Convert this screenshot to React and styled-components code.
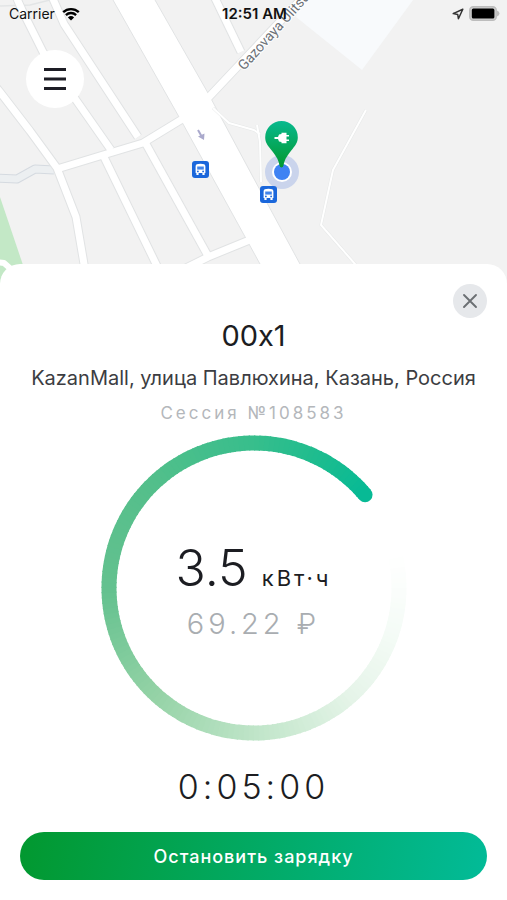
import React, { useState } from "react";
import styled, { createGlobalStyle } from "styled-components";

// angle in degrees clockwise from 12 o'clock, rgb
const ringStops = [
  [78, [255, 255, 255]],
  [110, [244, 251, 246]],
  [140, [229, 244, 232]],
  [180, [192, 229, 201]],
  [225, [147, 210, 165]],
  [270, [100, 193, 143]],
  [315, [84, 191, 139]],
  [360, [56, 190, 140]],
  [390, [27, 188, 143]],
  [410, [7, 186, 149]],
];

const RING_RADIUS = 145;
const RING_STEP = 2;

const ringColor = (angle) => {
  const next = ringStops.findIndex((stop) => stop[0] >= angle);
  if (next <= 0) return `rgb(${ringStops[0][1].join(",")})`;
  const [a0, c0] = ringStops[next - 1];
  const [a1, c1] = ringStops[next];
  const t = (angle - a0) / (a1 - a0);
  return `rgb(${c0.map((c, i) => Math.round(c + (c1[i] - c) * t)).join(",")})`;
};

const ringPoint = (angle) => {
  const rad = ((angle - 90) * Math.PI) / 180;
  return [
    153 + RING_RADIUS * Math.cos(rad),
    153 + RING_RADIUS * Math.sin(rad),
  ];
};

const ChargeRing = () => {
  const first = ringStops[0][0];
  const last = ringStops[ringStops.length - 1][0];
  const parts = [];
  for (let a = first; a < last; a += RING_STEP) {
    const end = Math.min(a + RING_STEP, last);
    const from = ringPoint(a);
    const to = ringPoint(Math.min(end + 0.5, last));
    parts.push(
      <path
        key={a}
        d={`M${from} A${RING_RADIUS} ${RING_RADIUS} 0 0 1 ${to}`}
        stroke={ringColor(end)}
      />
    );
  }
  const [capX, capY] = ringPoint(last);

  return (
    <StRingSvg viewBox="0 0 306 306" fill="none" strokeWidth="15" aria-hidden>
      {parts}
      <circle cx={capX} cy={capY} r="7.5" fill={ringColor(last)} />
    </StRingSvg>
  );
};

const BusStop = ({ x, y }) => (
  <g transform={`translate(${x} ${y})`}>
    <rect width="17" height="17" rx="3" fill="#1b67db" />
    <path
      d="M3.6 5.4c0-2 1.7-2.6 4.9-2.6s4.9.6 4.9 2.6v6.6h-.8v1.9h-2.2V12H6.600v1.900H4.400V12h-.8z"
      fill="#fff"
    />
    <path d="M5.2 5.5h6.600v3.100H5.200z" fill="#4385ea" />
    <circle cx="5.9" cy="10.4" r=".9" fill="#1b67db" />
    <circle cx="11.1" cy="10.4" r=".9" fill="#1b67db" />
  </g>
);

const streets = [
  "M14 -8L22 10L43 52L76 100L111 150",
  "M104 157L156 264L164 280",
  "M50 -8L64 24L138 137",
  "M146 144L208 256",
  "M-4 87L0 92L30 131L57 168L76 217L84 264L86 280",
  "M57 169L103 155L143 143L184 118",
  "M180 271L208 257L252 239",
  "M212 -8L241 52",
  "M208 98L241 63L304 -4",
];

const paths = [
  "M213 108L229 123L254 130L260 134",
  "M257 125L260 142L261 182",
  "M366 110L333 170L321 225L355 264L370 280",
];

const MapView = () => (
  <StMapSvg viewBox="0 0 507 284" preserveAspectRatio="xMidYMin slice">
    <defs>
      <linearGradient id="pin" x1="0" y1="0" x2="0" y2="1">
        <stop offset="0" stopColor="#08b98e" />
        <stop offset="1" stopColor="#02982f" />
      </linearGradient>
    </defs>
    <path d="M0 197L24 268L14 284H0z" fill="#c3e8c6" />
    <path d="M296 17L362 70L416 -4H304z" fill="#f8fafc" />
    <g fill="none" strokeLinejoin="round">
      <path d="M-4 6L30 5L62 -3" stroke="#e3e5e6" strokeWidth="1.5" />
      <path
        d="M-4 178L17 179L35 169L54 170"
        stroke="#d5dae0"
        strokeWidth="9"
      />
      <path
        d="M-4 178L17 179L35 169L54 170"
        stroke="#eceff1"
        strokeWidth="7"
      />
      {streets.map((d) => (
        <path key={d} d={d} stroke="#e1e3e4" strokeWidth="9" />
      ))}
      <path
        d="M108 -8L113 0L183 124L260 264L270 284H311L300 264L253 177L208 93L155 0L150 -8z"
        fill="#fff"
        stroke="#e1e3e4"
      />
      {streets.map((d) => (
        <path key={d} d={d} stroke="#fff" strokeWidth="7" />
      ))}
      {paths.map((d) => (
        <path key={d} d={d} stroke="#e6e8e8" strokeWidth="3" />
      ))}
      {paths.map((d) => (
        <path key={d} d={d} stroke="#fff" strokeWidth="2" />
      ))}
      <path d="M-4 262L4 263L12 270" stroke="#fff" strokeWidth="6" />
      <path d="M198 130L202 137" stroke="#aaa9cc" strokeWidth="2" />
    </g>
    <path d="M198 136.5L204.5 133.5L204 140z" fill="#aaa9cc" />
    <StStreetName transform="translate(244 71) rotate(-48)">
      Gazovaya Ulitsa
    </StStreetName>
    <BusStop x={192} y={161} />
    <BusStop x={260} y={186} />
    <circle cx="282" cy="172" r="17" fill="#4a74d8" fillOpacity=".24" />
    <circle cx="282" cy="172" r="10" fill="#fff" />
    <circle cx="282" cy="172" r="8" fill="#3f82f3" />
    <path
      d="M281.5 121a16.300 16.300 0 0 1 16.300 16.300c0 5-2.300 8-5.300 11.700-4.500 5.500-8 10-9 16.500q-.4 2-2 2t-2-2c-1-6.500-4.500-11-9-16.500-3-3.700-5.300-6.700-5.300-11.700A16.300 16.300 0 0 1 281.500 121z"
      fill="url(#pin)"
    />
    <path
      d="M274.5 137h3.500l1-2.500 2.500-.5v-1.200h5v2.200h2.500v1.500h-2.500v3h2.500v1.500h-2.500v2.200h-5V142l-2.500-.5-1-2.500h-3.500z"
      fill="#fff"
    />
  </StMapSvg>
);

const App = () => {
  const [open, setOpen] = useState(true);

  return (
    <StScreen>
      <GlobalStyle />
      <StTop>
        <MapView />
        <StStatusBar>
          <StCarrier>
            Carrier
            <svg width="18" height="14" viewBox="0 0 18 14" fill="none">
              <path
                d="M1.2 5.2a11.200 11.200 0 0 1 15.600 0M3.900 8.100a7.300 7.300 0 0 1 10.200 0"
                stroke="#000"
                strokeWidth="2.3"
              />
              <path d="M9 13.6L5.900 10.400a4.500 4.500 0 0 1 6.200 0z" fill="#000" />
            </svg>
          </StCarrier>
          <StTime>12:51 AM</StTime>
          <StSignals>
            <svg width="12" height="12" viewBox="0 0 12 12" fill="none">
              <path
                d="M10.8 1.2L1.200 5.600l4.500.8.700 4.300z"
                stroke="#333"
                strokeWidth="1.5"
                strokeLinejoin="round"
              />
            </svg>
            <svg width="31" height="15" viewBox="0 0 31 15">
              <rect
                x=".8"
                y=".8"
                width="26.4"
                height="13.4"
                rx="3.5"
                fill="#d0d0d0"
                stroke="#bdbdbd"
                strokeWidth="1.5"
              />
              <rect x="2.8" y="2.5" width="22.6" height="10" rx="1.5" />
              <path d="M28 4.5q2.500.8 2.500 3t-2.500 3z" fill="#bdbdbd" />
            </svg>
          </StSignals>
        </StStatusBar>
        <StMenuBtn aria-label="Меню">
          <svg width="24" height="24" viewBox="0 0 24 24">
            <path
              d="M1 2.5h22M1 12h22M1 21.500h22"
              stroke="#1d1d25"
              strokeWidth="2.8"
            />
          </svg>
        </StMenuBtn>
      </StTop>
      {open && (
        <StPanel>
          <StCloseBtn aria-label="Закрыть" onClick={() => setOpen(false)}>
            <svg width="16" height="16" viewBox="0 0 16 16">
              <path
                d="M2 2l12 12M14 2L2 14"
                stroke="#6b6f73"
                strokeWidth="1.9"
                strokeLinecap="round"
              />
            </svg>
          </StCloseBtn>
          <StTitle>00x1</StTitle>
          <StAddress>KazanMall, улица Павлюхина, Казань, Россия</StAddress>
          <StSession>Сессия №108583</StSession>
          <StRing>
            <ChargeRing />
            <StEnergy>
              3.5 <StUnit>кВт·ч</StUnit>
            </StEnergy>
            <StPrice>69.22 ₽</StPrice>
          </StRing>
          <StTimer>0:05:00</StTimer>
          <StStopBtn>Остановить зарядку</StStopBtn>
        </StPanel>
      )}
    </StScreen>
  );
};

export default App;

const GlobalStyle = createGlobalStyle`
  * {
    box-sizing: border-box;
  }
  body {
    margin: 0;
    background: #fff;
    color: #1c1d22;
    font-family: Inter, "Noto Sans", sans-serif;
  }
  p, h1 {
    margin: 0;
  }
  button {
    border: 0;
    padding: 0;
    font-family: inherit;
    cursor: pointer;
  }
`;

const StScreen = styled.div`
  display: flex;
  flex-flow: column;
  min-height: 100vh;
`;

const StTop = styled.header`
  position: relative;
  height: 284px;
  background: #f2f2f2;
  overflow: hidden;
`;

const StMapSvg = styled.svg`
  position: absolute;
  inset: 0;
  width: 100%;
  height: 100%;
`;

const StStreetName = styled.text`
  font-family: Roboto, sans-serif;
  font-size: 14px;
  fill: #6d7278;
  stroke: #fff;
  stroke-width: 2px;
  paint-order: stroke;
`;

const StStatusBar = styled.div`
  position: relative;
  display: grid;
  grid-template-columns: 1fr auto 1fr;
  align-items: center;
  height: 27px;
  padding: 0 7px 0 9px;
  color: #111;
  font-size: 14px;
`;

const StCarrier = styled.div`
  display: flex;
  align-items: center;
  column-gap: 7px;
`;

const StTime = styled.div`
  font-size: 15px;
  font-weight: 600;
`;

const StSignals = styled.div`
  display: flex;
  justify-content: flex-end;
  align-items: center;
  column-gap: 5px;
`;

const StMenuBtn = styled.button`
  position: relative;
  display: flex;
  justify-content: center;
  align-items: center;
  width: 58px;
  height: 58px;
  margin: 23px 0 0 26px;
  border-radius: 50%;
  background: #fff;
`;

const StPanel = styled.main`
  position: relative;
  display: flex;
  flex: 1;
  flex-flow: column;
  align-items: center;
  margin-top: -20px;
  padding: 20px;
  border-radius: 20px 20px 0 0;
  background: #fff;
  text-align: center;
`;

const StCloseBtn = styled.button`
  display: flex;
  justify-content: center;
  align-items: center;
  align-self: flex-end;
  width: 34px;
  height: 34px;
  border-radius: 50%;
  background: #e6e8eb;
`;

const StTitle = styled.h1`
  font-size: 29px;
  font-weight: 400;
  line-height: 36px;
  font-feature-settings: "calt" 0;
`;

const StAddress = styled.p`
  margin-top: 12px;
  color: #3c3d42;
  font-size: 20px;
  font-weight: 400;
  line-height: 24px;
`;

const StSession = styled.p`
  margin-top: 13px;
  color: #b4b7bb;
  font-size: 17px;
  font-weight: 400;
  line-height: 20px;
  letter-spacing: 3px;
`;

const StRing = styled.div`
  position: relative;
  display: flex;
  flex-flow: column;
  justify-content: center;
  align-items: center;
  width: 100%;
  max-width: 306px;
  aspect-ratio: 1;
  margin-top: 12px;
  padding-top: 6px;
`;

const StRingSvg = styled.svg`
  position: absolute;
  inset: 0;
  width: 100%;
  height: 100%;
`;

const StEnergy = styled.p`
  font-size: 50px;
  font-weight: 300;
  line-height: 56px;
`;

const StUnit = styled.span`
  font-size: 22px;
  font-weight: 400;
  letter-spacing: 3px;
`;

const StPrice = styled.p`
  color: #a9adb1;
  font-size: 29px;
  font-weight: 300;
  line-height: 36px;
  letter-spacing: 4px;
`;

const StTimer = styled.p`
  margin-top: 26px;
  font-size: 34px;
  font-weight: 300;
  line-height: 40px;
  letter-spacing: 4px;
`;

const StStopBtn = styled.button`
  width: 100%;
  height: 48px;
  margin-top: 25px;
  border-radius: 24px;
  background: linear-gradient(100deg, #02982f, #02bb98);
  color: #fff;
  font-size: 18px;
  font-weight: 500;
  letter-spacing: 1px;
`;
